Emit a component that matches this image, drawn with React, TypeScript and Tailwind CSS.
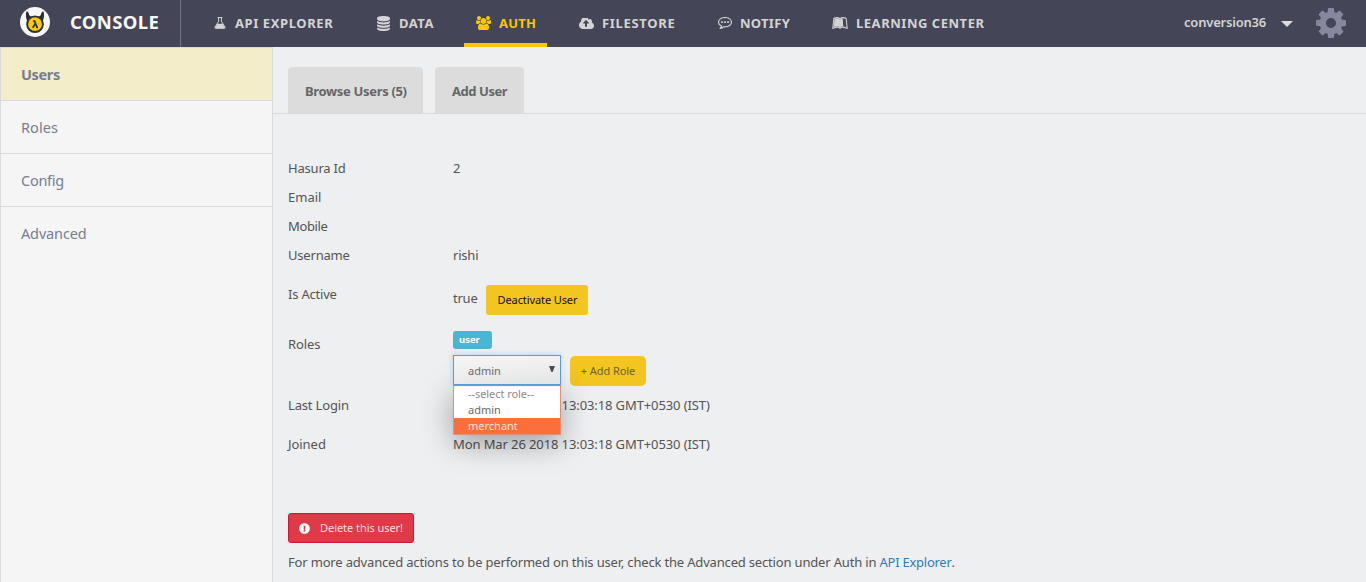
import React from "react";
import type { ReactNode } from "react";
import { FaLeanpub, FaExclamationCircle } from "react-icons/fa";

function HasuraLogo() {
  return (
    <svg viewBox="0 0 30 30" className="h-[30px] w-[30px]">
      <circle cx="15" cy="15" r="15" fill="#f7f7f7" />
      <g fill="#2c2f30">
        <circle cx="15" cy="17.200" r="8.800" />
        <path d="M6.400 4.600C5.600 8 5.800 11.500 7.400 14.500L13 9.800C10.200 10 9 8.500 8.600 6C8.200 5 7.200 4.300 6.400 4.600Z" />
        <path d="M23.600 4.600C24.400 8 24.200 11.500 22.600 14.500L17 9.800C19.800 10 21 8.500 21.400 6C21.800 5 22.800 4.300 23.600 4.600Z" />
      </g>
      <circle cx="15" cy="17.200" r="6.900" fill="#fbc80a" />
      <path d="M13 14h1.500l2.600 6.300h.9M15.200 16.700l-2.400 4" fill="none" stroke="#2c2f30" strokeWidth="1.700" />
    </svg>
  );
}

function FlaskIcon() {
  return (
    <svg viewBox="0 0 12 12" className="h-3 w-3" fill="none" stroke="currentColor">
      <path d="M3.600 .5h4.800" strokeWidth="1" />
      <path d="M4.600 .5V4.300L1 10.200Q.6 11.300 1.600 11.300H10.400Q11.400 11.300 11 10.200L7.400 4.300V.5" strokeWidth="1" />
      <path d="M3.300 6.800H8.700L11.200 11.300H.8Z" fill="currentColor" stroke="none" />
    </svg>
  );
}

function DatabaseIcon() {
  return (
    <svg viewBox="0 0 1536 1792" className="h-[15px] w-[13px]" fill="currentColor">
      <path d="M768 768q237 0 443-43t325-127v170q0 69-103 128t-280 93.500-385 34.500-385-34.500-280-93.500-103-128v-170q119 84 325 127t443 43zm0 768q237 0 443-43t325-127v170q0 69-103 128t-280 93.500-385 34.500-385-34.500-280-93.500-103-128v-170q119 84 325 127t443 43zm0-384q237 0 443-43t325-127v170q0 69-103 128t-280 93.500-385 34.500-385-34.500-280-93.500-103-128v-170q119 84 325 127t443 43zm0-1152q208 0 385 34.500t280 93.500 103 128v128q0 69-103 128t-280 93.500-385 34.500-385-34.500-280-93.500-103-128v-128q0-69 103-128t280-93.500 385-34.500z" />
    </svg>
  );
}

function UsersIcon() {
  return (
    <svg viewBox="0 0 1920 1792" className="h-[14px] w-[15px]" fill="currentColor">
      <path d="M593 896q-162 5-265 128h-134q-82 0-138-40.500t-56-118.500q0-353 124-353 6 0 43.500 21t97.500 42.500 119 21.500q67 0 133-23-5 37-5 66 0 159 93 256zm1071 637q0 120-73 189.500t-194 69.500h-874q-121 0-194-69.500t-73-189.500q0-53 3.500-103.500t14-109 26.500-108.500 43-97.500 62-81 85.500-53.500 111.500-20q10 0 43 21.500t73 48 107 48 135 21.500 135-21.500 107-48 73-48 43-21.500q61 0 111.500 20t85.500 53.500 62 81 43 97.500 26.500 108.500 14 109 3.500 103.500zm-1024-1277q0 106-75 181t-181 75-181-75-75-181 75-181 181-75 181 75 75 181zm704 384q0 159-112.500 271.500t-271.500 112.500-271.500-112.500-112.500-271.500 112.500-271.500 271.500-112.500 271.500 112.500 112.500 271.500zm576 225q0 78-56 118.500t-138 40.500h-134q-103-123-265-128 93-97 93-256 0-29-5-66 66 23 133 23 59 0 119-21.500t97.500-42.500 43.500-21q124 0 124 353zm-128-609q0 106-75 181t-181 75-181-75-75-181 75-181 181-75 181 75 75 181z" />
    </svg>
  );
}

function CloudUploadIcon() {
  return (
    <svg viewBox="-64 256 1920 1280" className="h-[11px] w-[15px]" preserveAspectRatio="none" fill="currentColor">
      <path d="M1216 864q0-14-9-23l-352-352q-9-9-23-9t-23 9l-351 351q-10 12-10 24 0 14 9 23t23 9h224v352q0 13 9.500 22.500t22.500 9.500h192q13 0 22.500-9.500t9.500-22.500v-352h224q13 0 22.500-9.500t9.500-22.500zm640 288q0 159-112.500 271.500t-271.500 112.500h-1088q-185 0-316.500-131.500t-131.500-316.500q0-130 70-240t188-165q-2-30-2-43 0-212 150-362t362-150q156 0 285.500 87t188.500 231q71-62 166-62 106 0 181 75t75 181q0 76-41 138 130 31 213.500 135.500t83.500 238.500z" />
    </svg>
  );
}

function CommentIcon() {
  return (
    <svg viewBox="0 0 14 12" className="h-3 w-[14px]" fill="none" stroke="currentColor">
      <path strokeWidth="1.100" d="M3.800 9.200C1.800 8.400 .5 7 .5 5.200C.5 2.600 3.400 .5 7 .5S13.500 2.600 13.500 5.200S10.600 9.900 7 9.900C6.500 9.900 6.100 9.900 5.600 9.800C4.700 10.700 3.500 11.300 1.800 11.500C3 10.700 3.500 10.100 3.800 9.200Z" />
      <path d="M3.200 4.300h1.700v1.700H3.200zM6.200 4.300h1.700v1.700H6.200zM9.200 4.300h1.700v1.700H9.200z" fill="currentColor" stroke="none" />
    </svg>
  );
}

function CogIcon() {
  return (
    <svg viewBox="0 128 1536 1536" className="h-[30px] w-[30px]" fill="#85879f">
      <path d="M1024 896q0-106-75-181t-181-75-181 75-75 181 75 181 181 75 181-75 75-181zm512-109v222q0 12-8 23t-20 13l-185 28q-19 54-39 91 35 50 107 138 10 12 10 25t-9 23q-27 37-99 108t-94 71q-12 0-26-9l-138-108q-44 23-91 38-16 136-29 186-7 28-36 28h-222q-14 0-24.500-8.500t-11.500-21.500l-28-184q-49-16-90-37l-141 107q-10 9-25 9-14 0-25-11-126-114-165-168-7-10-7-23 0-12 8-23 15-21 51-66.500t54-70.500q-27-50-41-99l-183-27q-13-2-21-12.500t-8-23.500v-222q0-12 8-23t19-13l186-28q14-46 39-92-40-57-107-138-10-12-10-24 0-10 9-23 26-36 98.500-107.500t94.500-71.500q13 0 26 10l138 107q44-23 91-38 16-136 29-186 7-28 36-28h222q14 0 24.500 8.500t11.500 21.500l28 184q49 16 90 37l142-107q9-9 24-9 13 0 25 10 129 119 165 170 7 8 7 22 0 12-8 23-15 21-51 66.500t-54 70.500q26 50 41 98l183 28q13 2 21 12.500t8 23.500z" />
    </svg>
  );
}

interface NavProps {
  icon: ReactNode;
  label: string;
  box: string;
  slot: string;
  tracking: string;
  active?: boolean;
}

function NavItem({ icon, label, box, slot, tracking, active }: NavProps) {
  return (
    <a className={`flex h-[47px] shrink-0 items-center border-b-4 pl-3 ${box} ${active ? "border-[#f9c700] text-[#f9c700]" : "border-transparent text-[#d3d4d3]"}`}>
      <span className={`flex h-[15px] shrink-0 items-center pt-[3px] ${slot}`}>{icon}</span>
      <span className={`whitespace-nowrap pt-[3px] text-[13px] leading-4 font-bold ${tracking}`}>{label}</span>
    </a>
  );
}

function SideItem({ label, tracking, active }: { label: string; tracking: string; active?: boolean }) {
  return (
    <li className={`flex h-[53px] items-center border-b border-[#d9dadc] pt-[1px] pl-5 text-[14.5px] text-[#767e93] ${tracking} ${active ? "bg-[#f3edc9] font-bold" : "last:border-b-0 last:pt-0"}`}>
      {label}
    </li>
  );
}

function Row({ label, tracking, height, children }: { label: string; tracking: string; height: string; children?: ReactNode }) {
  return (
    <div className={`flex ${height}`}>
      <div className={`w-[165px] shrink-0 leading-[29px] ${tracking}`}>{label}</div>
      {children}
    </div>
  );
}

export default function App() {
  const date = "Mon Mar 26 2018 13:03:18 GMT+0530 (IST)";
  return (
    <div className="flex h-[582px] w-[1366px] flex-col overflow-hidden bg-[#eeeff1] font-['Noto_Sans',sans-serif] text-[13px] text-[#545454]">
      <header className="flex h-[47px] shrink-0 bg-[#444556]">
        <div className="flex w-[181px] shrink-0 items-center border-r border-[#70748c] pb-[3px] pl-5">
          <HasuraLogo />
          <span className="ml-5 text-[18.5px] leading-6 font-bold tracking-[0.350px] text-[#f9f9f9]">CONSOLE</span>
        </div>
        <nav className="ml-[21px] flex gap-5">
          <NavItem icon={<FlaskIcon />} label="API EXPLORER" box="w-[143px]" slot="w-[21px]" tracking="tracking-[0.590px]" />
          <NavItem icon={<DatabaseIcon />} label="DATA" box="w-[79px]" slot="w-[22px]" tracking="tracking-[0.500px]" />
          <NavItem icon={<UsersIcon />} label="AUTH" box="w-[83px]" slot="w-[23px]" tracking="tracking-[0.250px]" active />
          <NavItem icon={<CloudUploadIcon />} label="FILESTORE" box="w-[119px]" slot="w-[23px]" tracking="tracking-[0.690px]" />
          <NavItem icon={<CommentIcon />} label="NOTIFY" box="w-[94px]" slot="w-[22px]" tracking="tracking-[0.300px]" />
          <NavItem icon={<FaLeanpub className="h-4 w-4" preserveAspectRatio="none" />} label="LEARNING CENTER" box="w-[176px]" slot="w-6" tracking="tracking-[0.530px]" />
        </nav>
        <div className="ml-auto flex items-center pr-5 pb-[2px]">
          <span className="w-[97px] text-[13px] font-semibold tracking-[-0.2px] text-[#d3d4d3]">conversion36</span>
          <svg viewBox="0 0 12 6" className="mt-[2px] h-[6px] w-3" fill="#dededc"><path d="M0 0h12l-6 6z" /></svg>
          <span className="ml-[23px]"><CogIcon /></span>
        </div>
      </header>

      <div className="flex min-h-0 flex-1">
        <aside className="w-[273px] shrink-0 border-x border-t border-[#d9dadc] bg-[#f5f5f5]">
          <ul>
            <SideItem label="Users" tracking="tracking-[-0.350px]" active />
            <SideItem label="Roles" tracking="tracking-[0.050px]" />
            <SideItem label="Config" tracking="tracking-[-0.260px]" />
            <SideItem label="Advanced" tracking="tracking-[-0.150px]" />
          </ul>
        </aside>

        <main className="flex min-w-0 flex-1 flex-col">
          <div className="flex shrink-0 gap-3 border-b border-[#d9dadc] pt-5 pl-[15px] font-bold text-[#666]">
            <div className="flex h-[46px] w-[135px] items-center rounded-t-[4px] bg-[#dcdcdc] pt-[3px] pl-[17px] tracking-[-0.330px] whitespace-nowrap">Browse Users (5)</div>
            <div className="flex h-[46px] w-[89px] items-center rounded-t-[4px] bg-[#dcdcdc] pt-[3px] pl-[17px] tracking-[-0.450px] whitespace-nowrap">Add User</div>
          </div>

          <section className="pt-10 pl-[15px]">
            <Row label="Hasura Id" tracking="tracking-[-0.200px]" height="h-[29px]"><span className="leading-[29px]">2</span></Row>
            <Row label="Email" tracking="tracking-[0px]" height="h-[29px]" />
            <Row label="Mobile" tracking="tracking-[-0.370px]" height="h-[29px]" />
            <Row label="Username" tracking="tracking-[-0.190px]" height="h-[29px]"><span className="leading-[29px] tracking-[-0.200px]">rishi</span></Row>

            <div className="pt-[10px]">
              <Row label="Is Active" tracking="tracking-[-0.200px]" height="h-[50px]">
                <div className="box-content flex h-[30px] items-center pt-[5px]">
                  <span className="w-[33px] pb-[2px] tracking-[-0.230px]">true</span>
                  <button className="h-[30px] w-[102px] rounded-[3px] bg-[#f3c521] pl-[1px] text-[11px] tracking-[-0.100px] text-[#111]">Deactivate User</button>
                </div>
              </Row>
            </div>

            <Row label="Roles" tracking="tracking-[-0.100px]" height="h-[61px]">
              <div className="pt-[1px]">
                <span className="flex h-[18px] w-[39px] items-center rounded-[3px] bg-[#4ab6d6] pl-[6px] text-[9.5px] font-bold text-white">user</span>
                <div className="mt-[6px] flex gap-[9px]">
                  <div className="relative z-10 h-[30px] w-[108px]">
                    <ul className="absolute top-[30px] left-0 h-[50px] w-[108px] border border-t-[#e0795b] border-[#d9917b] bg-white text-[11px] leading-4 text-[#6a6a6a] shadow-[0_8px_30px_rgba(0,0,0,0.34)]">
                      <li className="h-4 pl-[14px] tracking-[-0.060px] text-[#8c8c8c]">--select role--</li>
                      <li className="h-4 pl-[14px]">admin</li>
                      <li className="h-4 bg-[#fb6f3d] pl-[14px] text-[#fbe5dc]">merchant</li>
                    </ul>
                    <div className="relative flex h-[30px] items-center justify-between border border-[#5b9ae0] bg-[linear-gradient(175deg,#f5f5f5,#eeeeef_50%,#e2e3e3)] pr-[5px] pl-[14px] text-[11px] text-[#6a6a6a] shadow-[-1px_-1px_5px_rgba(91,154,224,0.3)]">
                      <span className="pt-[2px]">admin</span>
                      <svg viewBox="0 0 6 6" className="mb-[2px] h-[6px] w-[6px]" fill="#4c4c4c"><path d="M0 0h6L3.600 6H2.400z" /></svg>
                    </div>
                  </div>
                  <button className="mt-[1px] h-[30px] w-[76px] rounded-[5px] bg-[#f3c521] text-[11px] tracking-[-0.080px] text-[#6f6232]">+ Add Role</button>
                </div>
              </div>
            </Row>

            <Row label="Last Login" tracking="tracking-[-0.160px]" height="h-[39px]"><span className="leading-[29px] tracking-[-0.105px]">{date}</span></Row>
            <Row label="Joined" tracking="tracking-[-0.050px]" height="h-[29px]"><span className="leading-[29px] tracking-[-0.105px]">{date}</span></Row>

            <button className="mt-[54px] flex h-[30px] w-[126px] items-center rounded-[3px] border border-[#d3142d] bg-[#de3a47] pl-[10px] text-[11px] tracking-[-0.050px] whitespace-nowrap text-[#f8dfe0]">
              <FaExclamationCircle className="mr-[10px] h-[11px] w-[11px] shrink-0 text-white" />
              Delete this user!
            </button>
            <p className="pt-[5px] leading-[29px] tracking-[-0.174px] whitespace-nowrap">
              For more advanced actions to be performed on this user, check the Advanced section under Auth in{" "}
              <a className="tracking-[-0.250px] text-[#337ab7]">API Explorer</a>.
            </p>
          </section>
        </main>
      </div>
    </div>
  );
}
